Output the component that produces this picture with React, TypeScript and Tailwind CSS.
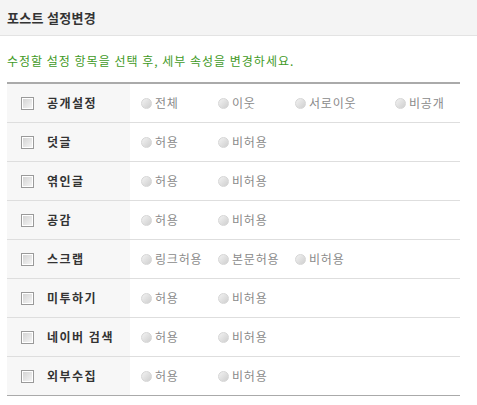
import React from "react";

interface Row {
  label: string;
  options: { text: string; w?: string }[];
}

const allow = [{ text: "허용" }, { text: "비허용" }];

const rows: Row[] = [
  {
    label: "공개설정",
    options: [{ text: "전체" }, { text: "이웃" }, { text: "서로이웃", w: "w-[100px]" }, { text: "비공개", w: "w-auto" }],
  },
  { label: "덧글", options: allow },
  { label: "엮인글", options: allow },
  { label: "공감", options: allow },
  { label: "스크랩", options: [{ text: "링크허용" }, { text: "본문허용" }, { text: "비허용" }] },
  { label: "미투하기", options: allow },
  { label: "네이버 검색", options: allow },
  { label: "외부수집", options: allow },
];

const Checkbox = () => (
  <span className="w-[13px] h-[13px] border border-[#9a9a9a] bg-white p-[1px] flex shrink-0">
    <span className="flex-1 bg-gradient-to-br from-[#d4d4d4] to-[#f4f4f4]" />
  </span>
);

const Radio = () => (
  <span className="w-[11px] h-[11px] rounded-full border border-[#d6d6d6] bg-gradient-to-br from-[#f2f2f2] to-[#cfcfcf] shrink-0" />
);

export default function App() {
  return (
    <div className="w-[477px] h-[405px] bg-white text-[12px] font-['Noto_Sans_CJK_KR','Noto_Sans',sans-serif]">
      <div className="h-[36px] bg-[#f4f4f4] border-b border-[#e3e3e3] px-[7px] flex items-center">
        <h2 className="text-[13px] font-bold text-[#333] tracking-[0.3px]">포스트 설정변경</h2>
      </div>
      <div className="px-[7px] w-[467px]">
        <p className="mt-[16px] leading-[18px] text-[#3f9a1f] tracking-[1px]">
          수정할 설정 항목을 선택 후, 세부 속성을 변경하세요.
        </p>
        <div className="mt-[12px] border-t-2 border-[#aaaaaa]">
          {rows.map((row, i) => (
            <div
              key={row.label}
              className={`flex h-[39px] border-b ${i === rows.length - 1 ? "border-[#aaaaaa]" : "border-[#dedede]"}`}
            >
              <div className="w-[123px] shrink-0 bg-[#f7f7f7] flex items-center pl-[14px] gap-[13px]">
                <Checkbox />
                <span className="font-bold text-[#333] tracking-[1.5px] whitespace-nowrap">{row.label}</span>
              </div>
              <div className="flex-1 flex items-center pl-[11px]">
                {row.options.map((o) => (
                  <label
                    key={o.text}
                    className={`flex items-center gap-[3px] shrink-0 ${o.w ?? "w-[77px]"} text-[#8a8a8a]`}
                  >
                    <Radio />
                    <span className="tracking-[0.8px] whitespace-nowrap">{o.text}</span>
                  </label>
                ))}
              </div>
            </div>
          ))}
        </div>
      </div>
    </div>
  );
}
